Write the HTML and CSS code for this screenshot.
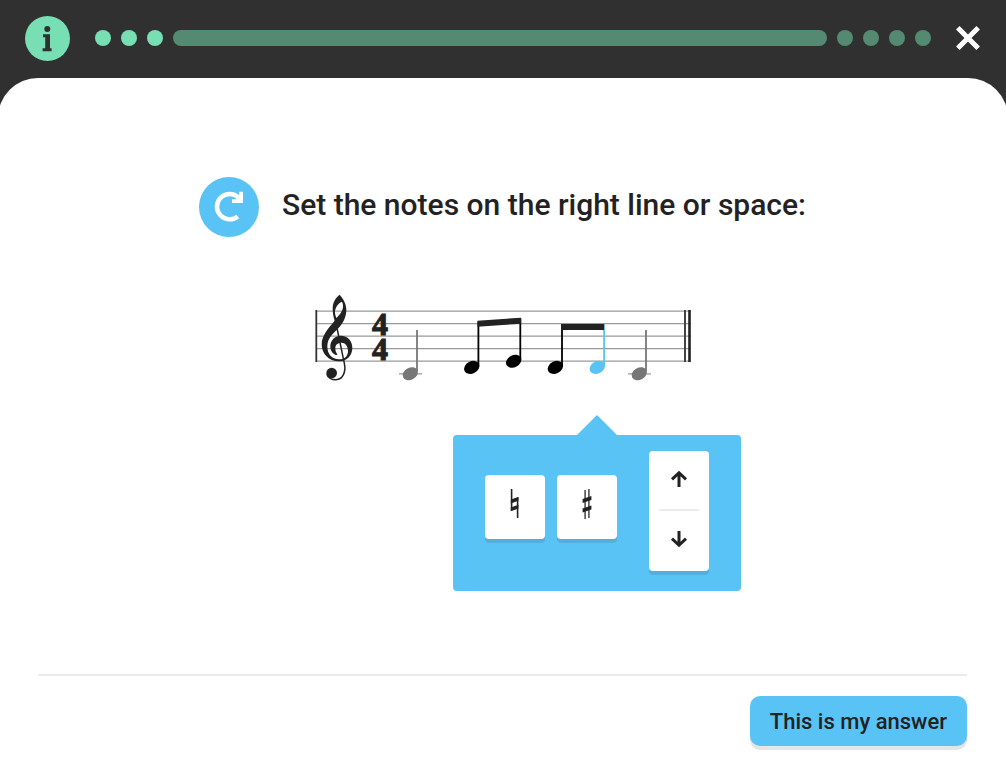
FILE: index.html
```html
<!DOCTYPE html>
<html lang="en">
<head>
<meta charset="utf-8">
<meta name="viewport" content="width=device-width, initial-scale=1">
<title>Music exercise</title>
<link rel="stylesheet" href="styles.css">
</head>
<body>
<header class="topbar">
  <button class="info" type="button" aria-label="Information">
    <svg width="45" height="45" viewBox="0 0 45 45" aria-hidden="true">
      <circle cx="22.3" cy="13" r="3"/>
      <path d="M18 18.2h7v14h1.6v3h-9v-3h2.6v-11h-2.2z"/>
    </svg>
  </button>
  <div class="progress" role="img" aria-label="Progress">
    <span class="dot done"></span>
    <span class="dot done"></span>
    <span class="dot done"></span>
    <span class="bar"></span>
    <span class="dot"></span>
    <span class="dot"></span>
    <span class="dot"></span>
    <span class="dot"></span>
  </div>
  <button class="close" type="button" aria-label="Close">
    <svg width="24" height="24" viewBox="0 0 24 24" aria-hidden="true">
      <path d="M1.8 1.8 22.2 22.2M22.2 1.8 1.8 22.2" stroke="#fff" stroke-width="5" fill="none"/>
    </svg>
  </button>
</header>

<main class="panel">
  <div class="question">
    <button class="replay" type="button" aria-label="Replay">
      <svg width="60" height="60" viewBox="0 0 60 60" fill="none" stroke="#fff" aria-hidden="true">
        <path d="M38.8 39.4A12.7 12.7 0 1 1 39.6 20.6" stroke-width="4.5"/>
        <path d="M42.1 14.7V24.1H33" stroke-width="3.8"/>
        <path d="M42 18V24H35.5z" fill="#fff" stroke="none"/>
      </svg>
    </button>
    <h1 class="title">Set the notes on the right line or space:</h1>
  </div>

  <div class="score">
    <svg class="staff" width="400" height="100" viewBox="-2 0 400 100" role="img" aria-label="Staff in four four time">
      <path d="M11 26.1H386M11 38.6H386M11 51.1H386M11 63.6H386M11 76.1H386" stroke="#999" stroke-width="1.2" fill="none"/>
      <path d="M11.3 25V77" stroke="#333" stroke-width="1.8"/>
      <path d="M380 25V77" stroke="#444" stroke-width="2"/>
      <path d="M384.5 25V77" stroke="#222" stroke-width="2.6"/>
      <!-- treble clef -->
      <g transform="scale(.33333)" fill="#222">
        <path fill-rule="evenodd" d="M104 29C116 42 124 58 124 74C124 98 113 115 100 130C84 147 67 160 67 184C67 208 81 223 102 223C120 223 129 212 129 198C129 183 121 173 109 173C98 173 91 180 91 189C91 197 93 203 97 207C97 210 94 211 92 210C82 206 76 196 76 184C76 166 90 152 108 152C128 152 142 168 142 188C142 213 124 229 101 229C72 229 50 207 50 178C50 150 72 128 89 107C85 96 83 84 83 70C83 52 92 38 104 29ZM110 50C99 56 90 68 90 81C90 88 92 93 94 99C105 89 114 78 114 64C114 57 113 52 110 50Z"/>
        <path d="M91 105L118 235C124 262 112 284 93 284C80 284 68 278 66 268" fill="none" stroke="#222" stroke-width="4.5"/>
        <circle cx="80" cy="264" r="16"/>
      </g>
      <text class="meter" x="75" y="50">4</text>
      <text class="meter" x="75" y="75">4</text>
      <!-- first and last quarter notes -->
      <g fill="#777" stroke="#777">
        <path d="M94 88.8H117M323 88.8H346" stroke="#999" stroke-width="1.2"/>
        <ellipse cx="105.3" cy="88.7" rx="8.1" ry="6" transform="rotate(-28 105.3 88.7)" stroke="none"/>
        <path d="M112 45V86" stroke-width="1.8"/>
        <ellipse cx="334.3" cy="88.7" rx="8.1" ry="6" transform="rotate(-28 334.3 88.7)" stroke="none"/>
        <path d="M341 45V86" stroke-width="1.8"/>
      </g>
      <!-- beamed eighth notes -->
      <g fill="#000">
        <ellipse cx="166.8" cy="82.4" rx="8.1" ry="6" transform="rotate(-28 166.8 82.4)"/>
        <ellipse cx="208.7" cy="76.2" rx="8.1" ry="6" transform="rotate(-28 208.7 76.2)"/>
        <ellipse cx="250.4" cy="82.4" rx="8.1" ry="6" transform="rotate(-28 250.4 82.4)"/>
        <path d="M173.4 37V80M215.3 34V74M257 40V80" stroke="#000" stroke-width="1.8"/>
        <path d="M172.4 35.7 216.2 32.7V38.7L172.4 41.7zM256 39H299.4V45H256z" fill="#222"/>
      </g>
      <g fill="#5ac3f6">
        <ellipse cx="292.3" cy="82.4" rx="8.1" ry="6" transform="rotate(-28 292.3 82.4)"/>
        <path d="M299.1 45V80" stroke="#5ac3f6" stroke-width="1.8"/>
        <path d="M299.4 39h.7v7h-.7z"/>
      </g>
    </svg>

    <div class="popover">
      <button class="key" type="button" aria-label="Natural">
        <svg width="12" height="32" viewBox="0 0 12 32" fill="#222" aria-hidden="true">
          <path d="M1.8 1h1.6v10.2L9.4 9V30H7.8V20.6L1.8 22.8zM3.4 14.2v5.2L7.8 18v-5.2z" fill-rule="evenodd"/>
          <path d="M1.8 11.7 9.4 9v3.8l-7.6 2.7zM1.8 19.4l7.6-2.7v3.8l-7.6 2.7z"/>
        </svg>
      </button>
      <button class="key" type="button" aria-label="Sharp">
        <svg width="12" height="32" viewBox="0 0 12 32" fill="#222" aria-hidden="true">
          <path d="M4.1 2V31M7.9 1V30" stroke="#444" stroke-width="1.5"/>
          <path d="M1.6 11 10.4 8v4L1.6 15zM1.6 20.6l8.8-3v4l-8.8 3z"/>
        </svg>
      </button>
      <div class="stepper">
        <button class="step" type="button" aria-label="Up">
          <svg width="18" height="18" viewBox="0 0 18 18" aria-hidden="true"><path d="M9 17V3M2 9.3 9 2.7 16 9.3"/></svg>
        </button>
        <button class="step" type="button" aria-label="Down">
          <svg width="18" height="18" viewBox="0 0 18 18" aria-hidden="true"><path d="M9 1V15M2 8.7 9 15.3 16 8.7"/></svg>
        </button>
      </div>
    </div>
  </div>

  <footer class="footer">
    <button class="answer" type="button">This is my answer</button>
  </footer>
</main>
</body>
</html>
```
FILE: styles.css
```css
* { box-sizing: border-box; }

body {
  margin: 0;
  min-height: 100vh;
  display: flex;
  flex-direction: column;
  overflow-x: hidden;
  background: #303030;
  color: #222;
  font-family: Roboto, "Liberation Sans", sans-serif;
  font-weight: 500;
}

button {
  margin: 0;
  padding: 0;
  border: 0;
  font: inherit;
  color: inherit;
  cursor: pointer;
}

svg { display: block; }

.topbar {
  display: flex;
  align-items: center;
  gap: 25px;
  padding: 16px 26px 17px 25px;
}

.info {
  border-radius: 50%;
  background: #78deb3;
  fill: #303030;
}

.progress {
  flex: 1;
  display: flex;
  gap: 10px;
  padding-bottom: 1px;
}

.dot,
.bar {
  height: 16px;
  border-radius: 8px;
  background: #548a71;
}

.dot { width: 16px; }
.dot.done { background: #78deb3; }
.bar { flex: 1; }

.close {
  padding-bottom: 1px;
  background: none;
}

.panel {
  flex: 1;
  display: flex;
  flex-direction: column;
  align-items: center;
  margin: 0 -2px;
  padding: 99px 41px 19px 40px;
  border-radius: 40px 40px 0 0;
  background: #fff;
}

.question {
  display: flex;
  align-items: center;
  gap: 23px;
}

.replay {
  border-radius: 50%;
  background: #5ac3f6;
}

.title {
  margin: 0;
  padding-bottom: 4px;
  font-size: 30px;
  line-height: 36px;
  font-weight: 500;
}

.score {
  display: flex;
  flex-direction: column;
  margin-top: 48px;
}

.meter {
  font: bold 32px "Liberation Serif", serif;
  text-anchor: middle;
  fill: #222;
  stroke: #222;
  stroke-width: 1px;
}

.popover {
  position: relative;
  display: flex;
  align-items: center;
  align-self: flex-start;
  gap: 12px;
  margin: 50px -38px 0 150px;
  padding: 16px 32px 20px;
  border-radius: 4px;
  background: #5ac3f6;
}

.popover::before {
  content: "";
  position: absolute;
  left: 50%;
  bottom: 100%;
  margin-left: -20px;
  border: 20px solid transparent;
  border-top: 0;
  border-bottom-color: #5ac3f6;
}

.key,
.stepper {
  width: 60px;
  border-radius: 4px;
  background: #fff;
  box-shadow: 0 4px 0 #51afdd;
}

.key {
  display: grid;
  justify-items: center;
  height: 64px;
  margin-bottom: 8px;
  padding-top: 13px;
  align-content: start;
}

.stepper {
  margin-left: 20px;
  padding: 0 10px;
}

.step {
  display: grid;
  place-items: center;
  width: 100%;
  height: 60px;
  padding-bottom: 4px;
  background: none;
}

.step + .step { border-top: 2px solid #ebebeb; }

.step:first-child {
  height: 58px;
  padding-bottom: 2px;
}

.step:last-child { height: 62px; }

.step path {
  fill: none;
  stroke: #222;
  stroke-width: 3;
}

.footer {
  display: flex;
  justify-content: flex-end;
  align-self: stretch;
  margin-top: auto;
  padding-top: 20px;
  border-top: 2px solid #ebebeb;
}

.answer {
  padding: 13px 20px 11px;
  border-radius: 10px;
  background: #5ac3f6;
  box-shadow: 0 4px 0 #e5e5e5;
  font-size: 22px;
  line-height: 26px;
}
```
